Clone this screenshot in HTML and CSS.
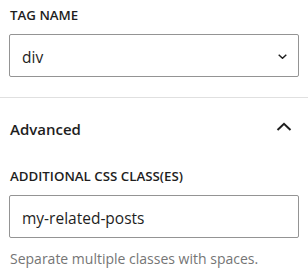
FILE: index.html
```html
<!DOCTYPE html>
<html lang="en">
<head>
<meta charset="utf-8">
<link rel="stylesheet" href="styles.css">
</head>
<body>
<div class="panel">
  <div class="section">
    <div class="label">TAG NAME</div>
    <div class="select">
      <span class="value">div</span>
      <svg class="chev-down" width="9" height="5" viewBox="0 0 9 5"><path d="M0.7 0.7l3.8 3.6 3.8-3.6" fill="none" stroke="#1e1e1e" stroke-width="1.4"/></svg>
    </div>
  </div>
  <div class="section advanced">
    <div class="header">
      <span class="title">Advanced</span>
      <svg class="chev-up" width="16" height="9" viewBox="0 0 16 9"><path d="M1.5 8L8 1.8 14.5 8" fill="none" stroke="#1e1e1e" stroke-width="2"/></svg>
    </div>
    <div class="label">ADDITIONAL CSS CLASS(ES)</div>
    <div class="input"><span class="value">my-related-posts</span></div>
    <p class="help">Separate multiple classes with spaces.</p>
  </div>
</div>
</body>
</html>
```

FILE: styles.css
```css
html, body {
  margin: 0;
  padding: 0;
  background: #fff;
}
body {
  font-family: "Open Sans", "Noto Sans", sans-serif;
  color: #1e1e1e;
}
.panel {
  width: 308px;
}
.section {
  padding: 5px 9px 20px;
}
.advanced {
  border-top: 1px solid #e0e0e0;
  padding-top: 19px;
}
.label {
  font-size: 13.3px;
  font-weight: 600;
  line-height: 20px;
  margin-bottom: 9px;
  padding-left: 1px;
}
.select, .input {
  box-sizing: border-box;
  height: 43px;
  border: 1px solid #949494;
  border-radius: 2px;
  display: flex;
  align-items: center;
  padding: 3px 12px 0 12px;
}
.select {
  justify-content: space-between;
}
.value {
  font-size: 15.5px;
}
.chev-down {
  margin-right: -1px;
  margin-bottom: 2px;
}
.header {
  display: flex;
  justify-content: space-between;
  align-items: center;
  height: 24px;
  margin-bottom: 25px;
}
.title {
  font-size: 15px;
  font-weight: 600;
  padding-left: 1px;
}
.chev-up {
  margin-right: 7px;
  margin-bottom: 5px;
}
.help {
  margin: 11px 0 0 1px;
  font-size: 14px;
  color: #757575;
}
```
